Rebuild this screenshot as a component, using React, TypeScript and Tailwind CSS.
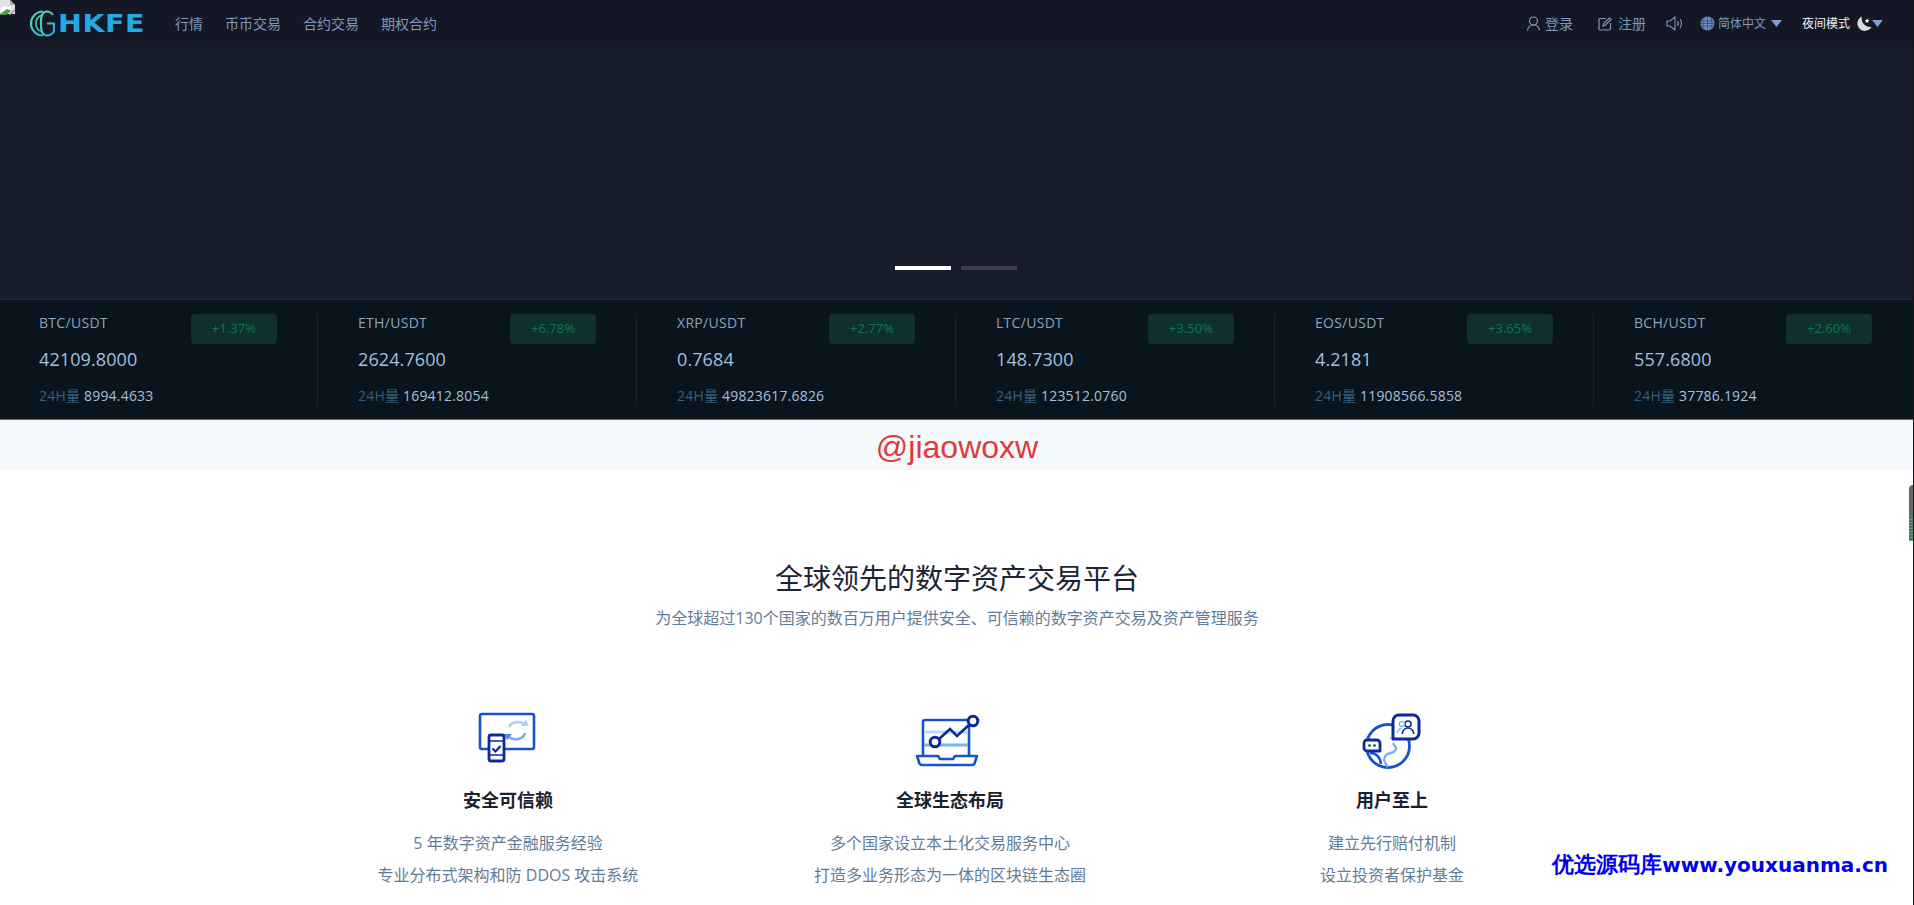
const FONT = "font-['Open_Sans','Noto_Sans_CJK_SC',sans-serif]";

const tickers = [
  { pair: "BTC/USDT", change: "+1.37%", price: "42109.8000", vol: "8994.4633" },
  { pair: "ETH/USDT", change: "+6.78%", price: "2624.7600", vol: "169412.8054" },
  { pair: "XRP/USDT", change: "+2.77%", price: "0.7684", vol: "49823617.6826" },
  { pair: "LTC/USDT", change: "+3.50%", price: "148.7300", vol: "123512.0760" },
  { pair: "EOS/USDT", change: "+3.65%", price: "4.2181", vol: "11908566.5858" },
  { pair: "BCH/USDT", change: "+2.60%", price: "557.6800", vol: "37786.1924" },
];

const features = [
  { title: "安全可信赖", l1: "5 年数字资产金融服务经验", l2: "专业分布式架构和防 DDOS 攻击系统", icon: <ShieldIcon /> },
  { title: "全球生态布局", l1: "多个国家设立本土化交易服务中心", l2: "打造多业务形态为一体的区块链生态圈", icon: <LaptopIcon /> },
  { title: "用户至上", l1: "建立先行赔付机制", l2: "设立投资者保护基金", icon: <GlobeIcon /> },
];

function ShieldIcon() {
  return (
    <svg width="60" height="58" viewBox="0 0 60 58" fill="none">
      <path d="M10 37H4a2 2 0 0 1-2-2V4a2 2 0 0 1 2-2h50a2 2 0 0 1 2 2v31a2 2 0 0 1-2 2H27" stroke="#1554cc" strokeWidth="2.600" />
      <path d="M31 15a9.500 8 0 0 1 15-3" stroke="#a9cff8" strokeWidth="2.400" />
      <path d="M47 21a9.500 8 0 0 1-16 4" stroke="#6ea9ef" strokeWidth="2.400" />
      <path d="M43 14h8l-3-6z" fill="#a9cff8" />
      <path d="M34 22h-8l3 6z" fill="#4a8ce6" />
      <rect x="11" y="23" width="15" height="26" rx="2" fill="#fff" stroke="#0b2a9c" strokeWidth="2.800" />
      <path d="M11 29h15M11 43h15" stroke="#0b2a9c" strokeWidth="1.600" />
      <path d="M14.500 36.500l3 3 5-5.500" stroke="#0b2a9c" strokeWidth="2.200" />
    </svg>
  );
}

function LaptopIcon() {
  return (
    <svg width="72" height="58" viewBox="0 0 72 58" fill="none">
      <path d="M9 43V10a2 2 0 0 1 2-2h42M55 14v29" stroke="#1554cc" strokeWidth="2.600" />
      <path d="M10 20h44" stroke="#bcd9fa" strokeWidth="2.800" />
      <path d="M10 33h44" stroke="#7db3f1" strokeWidth="2.800" />
      <path d="M3 44h21l2 3h13l2-3h22l-2 6a3 3 0 0 1-3 3H8a3 3 0 0 1-3-3z" fill="#fff" stroke="#1554cc" strokeWidth="2.600" strokeLinejoin="round" />
      <path d="M25 27l11-10 7 7 13-12" stroke="#0b2a9c" strokeWidth="2.600" />
      <circle cx="21" cy="30" r="4.800" fill="#fff" stroke="#0b2a9c" strokeWidth="3" />
      <circle cx="59" cy="9" r="4.800" fill="#fff" stroke="#0b2a9c" strokeWidth="3" />
    </svg>
  );
}

function GlobeIcon() {
  return (
    <svg width="60" height="58" viewBox="0 0 60 58" fill="none">
      <circle cx="26" cy="34" r="21.500" stroke="#1554cc" strokeWidth="2.800" />
      <path d="M26 55c-4-5-5-8-2-12 3-3 9-1 10-6 1-3-4-4-2-6" stroke="#7db3f1" strokeWidth="2.400" />
      <path d="M27 26c5 2 11-2 17 1" stroke="#bcd9fa" strokeWidth="2.400" />
      <path d="M8 41c6 0 10 4 11 11" stroke="#1554cc" strokeWidth="2.400" />
      <path d="M31 9a6 6 0 0 1 6-6h14a6 6 0 0 1 6 6v12a6 6 0 0 1-6 6H31z" fill="#fff" stroke="#0b2a9c" strokeWidth="3" strokeLinejoin="round" />
      <circle cx="46" cy="12" r="3" stroke="#0b2a9c" strokeWidth="1.600" />
      <path d="M40 22c1-4 3-6 6-6s5 2 6 6" stroke="#0b2a9c" strokeWidth="1.600" />
      <circle cx="40" cy="12" r="2.600" stroke="#7db3f1" strokeWidth="1.400" />
      <path d="M35 21c1-3 2-4 4-5" stroke="#7db3f1" strokeWidth="1.400" />
      <path d="M5 28h10a3 3 0 0 1 3 3v8H5a3 3 0 0 1-3-3v-5a3 3 0 0 1 3-3z" fill="#fff" stroke="#0b2a9c" strokeWidth="2.800" strokeLinejoin="round" />
      <circle cx="7.500" cy="33.500" r="1.300" fill="#0b2a9c" />
      <circle cx="12.500" cy="33.500" r="1.300" fill="#0b2a9c" />
    </svg>
  );
}

function BrokenImage() {
  return (
    <svg width="16" height="16" viewBox="0 0 16 16" className="absolute top-0 left-0">
      <path d="M0 0h10l5 5v9H0z" fill="#dfe3e6" />
      <path d="M10 0v5h5z" fill="#a9a9a9" />
      <path d="M1 8c2-2 4-2 6-1l4-1v2L1 13z" fill="#fff" />
      <path d="M0 14l7-5 4 2-5 4H0z" fill="#4f9a3c" />
      <path d="M9 15l6-6v1l-4 5z" fill="#777" />
    </svg>
  );
}

function Logo() {
  return (
    <div className="flex items-center">
      <svg width="26" height="27" viewBox="0 0 26 27" fill="none">
        <defs>
          <linearGradient id="lg" x1="0" y1="0" x2="1" y2="1">
            <stop offset="0" stopColor="#5fd6a8" />
            <stop offset="1" stopColor="#2aa7dc" />
          </linearGradient>
        </defs>
        <path d="M14 1.500a12 12 0 1 0 0 24" stroke="url(#lg)" strokeWidth="2.200" />
        <path d="M13 5a9 9 0 0 0 0 17" stroke="url(#lg)" strokeWidth="1.600" />
        <path d="M24 5a8 8 0 0 0-7-3.500c-4 1-5 4-5 12s1 11 5 12a9 9 0 0 0 8-4v-8h-7" stroke="url(#lg)" strokeWidth="2.200" />
      </svg>
      <span className="ml-[3px] origin-left scale-x-[1.14] font-['DejaVu_Sans',sans-serif] text-[25px] leading-none font-bold tracking-[0.500px] text-[#22a9e6]">HKFE</span>
    </div>
  );
}

function Caret({ color }: { color: string }) {
  return (
    <svg width="11" height="7" viewBox="0 0 11 7">
      <path d="M0 0h11L5.500 7z" fill={color} />
    </svg>
  );
}

function Header() {
  return (
    <header className="flex h-[47px] items-center bg-[#141824] pr-[31px] pl-[29px] text-[14px] text-[#7d97bf]">
      <div className="w-[146px]"><Logo /></div>
      <nav className="flex gap-[22px]">
        <span>行情</span>
        <span>币币交易</span>
        <span>合约交易</span>
        <span>期权合约</span>
      </nav>
      <div className="ml-auto flex items-center">
        <svg width="15" height="15" viewBox="0 0 15 15" fill="none" stroke="#7d97bf" strokeWidth="1.200" className="mr-[4px]">
          <circle cx="7.500" cy="5" r="4" />
          <path d="M1.500 14.500c.5-4 3-5.500 6-5.500s5.500 1.500 6 5.500" />
        </svg>
        <span>登录</span>
        <svg width="14" height="14" viewBox="0 0 14 14" fill="none" stroke="#7d97bf" strokeWidth="1.200" className="mr-[6px] ml-[25px]">
          <path d="M8 1.500H2a1 1 0 0 0-1 1v9.500a1 1 0 0 0 1 1h9.500a1 1 0 0 0 1-1V6" />
          <path d="M5 9l.5-2.500L11.500 1 13 2.500 7.500 8z" />
        </svg>
        <span>注册</span>
        <svg width="17" height="15" viewBox="0 0 17 15" fill="none" stroke="#7d97bf" strokeWidth="1.100" className="ml-[20px]">
          <path d="M1 5h3l5-4v13l-5-4H1z" />
          <path d="M11.500 5c1 1.500 1 3.500 0 5M14 3c2 2.500 2 6.500 0 9" />
        </svg>
        <svg width="15" height="15" viewBox="0 0 15 15" className="mr-[3px] ml-[17px]">
          <circle cx="7.500" cy="7.500" r="7" fill="#6f8cc0" />
          <path d="M1 5h13M.5 7.500h14M1 10h13M7.500.5v14M4.500 1.500c-2 3.500-2 8.500 0 12M10.500 1.500c2 3.500 2 8.500 0 12" stroke="#2b3a5c" strokeWidth=".6" fill="none" />
        </svg>
        <span className="text-[12px]">简体中文</span>
        <span className="ml-[5px]"><Caret color="#7d9fd6" /></span>
        <span className="ml-[20px] text-[12px] text-[#eceff4]">夜间模式</span>
        <svg width="16" height="16" viewBox="0 0 16 16" className="ml-[6px]">
          <path d="M6 .5a7.500 7.500 0 1 0 9.500 10.500A8.500 8.500 0 0 1 6 .5z" fill="#d9d9d9" />
          <path d="M11 2l.7 1.800 1.800.2-1.400 1.200.5 1.800-1.600-1-1.600 1 .5-1.800L9 4l1.800-.2z" fill="#fff" />
        </svg>
        <Caret color="#7d9fd6" />
      </div>
    </header>
  );
}

function Banner() {
  return (
    <section className="flex h-[252px] items-end justify-center gap-[10px] bg-[#171d2b] pr-[2px] pb-[29px]">
      <div className="h-[4px] w-[56px] bg-white" />
      <div className="h-[4px] w-[56px] bg-[#3d404c]" />
    </section>
  );
}

function Ticker() {
  return (
    <section className="grid h-[121px] grid-cols-[repeat(6,319px)] border-t border-b border-t-[#1d2735] border-b-[#5c6d7c] bg-[#0a141d] pt-[14px] pl-[39px]">
      {tickers.map((t, i) => (
        <div key={t.pair} className={`mr-[40px] flex h-[92px] flex-col border-r pr-[40px] ${i < 5 ? "border-[#18252f]" : "border-transparent"}`}>
          <div className="flex justify-between">
            <span className="pt-[1px] text-[14px] leading-[16px] tracking-[0.300px] text-[#8aa5bd]">{t.pair}</span>
            <span className="flex h-[30px] w-[86px] items-center justify-center rounded-[4px] bg-[#0f2f30] text-[13px] text-[#0a7a4c]">{t.change}</span>
          </div>
          <div className="mt-[3px] text-[18px] leading-[24px] tracking-[0.100px] text-[#a3c0dc]">{t.price}</div>
          <div className="mt-[16px] text-[14px] leading-[18px] tracking-[0.200px] text-[#a3c0dc]">
            <span className="text-[#34607f]">24H量</span> {t.vol}
          </div>
        </div>
      ))}
    </section>
  );
}

function Band() {
  return (
    <section className="flex h-[50px] items-center justify-center bg-[#f5f9fc] pt-[4px] font-['Liberation_Sans',sans-serif] text-[32px] leading-none text-[#e03a3a]">
      @jiaowoxw
    </section>
  );
}

function Features() {
  return (
    <section className="bg-white pt-[88px] text-center">
      <h2 className="text-[28px] leading-[40px] font-normal text-[#1d2433]">全球领先的数字资产交易平台</h2>
      <p className="mt-[8px] text-[16px] leading-[24px] text-[#5f7d98]">为全球超过130个国家的数百万用户提供安全、可信赖的数字资产交易及资产管理服务</p>
      <div className="mt-[82px] ml-[287px] grid w-[1326px] grid-cols-3">
        {features.map((f) => (
          <div key={f.title} className="flex flex-col items-center">
            <div className="flex h-[58px] items-center">{f.icon}</div>
            <div className="mt-[18px] text-[18px] leading-[24px] font-bold text-[#1a2130]">{f.title}</div>
            <div className="mt-[15px] text-[16px] leading-[32px] text-[#5f7d98]">{f.l1}</div>
            <div className="text-[16px] leading-[32px] text-[#5f7d98]">{f.l2}</div>
          </div>
        ))}
      </div>
    </section>
  );
}

export default function App() {
  return (
    <div className={`relative h-[905px] w-full overflow-hidden bg-white ${FONT}`}>
      <BrokenImage />
      <Header />
      <Banner />
      <Ticker />
      <Band />
      <Features />
      <div className="absolute right-[26px] bottom-[29px] font-['DejaVu_Sans',sans-serif] text-[20px] leading-none font-bold text-[#0000f0]">
        <span className="text-[22px]">优选源码库</span>www.youxuanma.cn
      </div>
      <div className="absolute top-[485px] right-0 h-[56px] w-[5px] rounded-l-[4px] bg-[#666]">
        <div className="mt-[34px] h-[22px] w-full bg-[repeating-linear-gradient(to_bottom,#3fbf62_0,#3fbf62_1px,#666_1px,#666_3px)]" />
      </div>
      <div className="absolute top-0 right-0 h-full w-[1px] bg-[#16171c]" />
    </div>
  );
}
